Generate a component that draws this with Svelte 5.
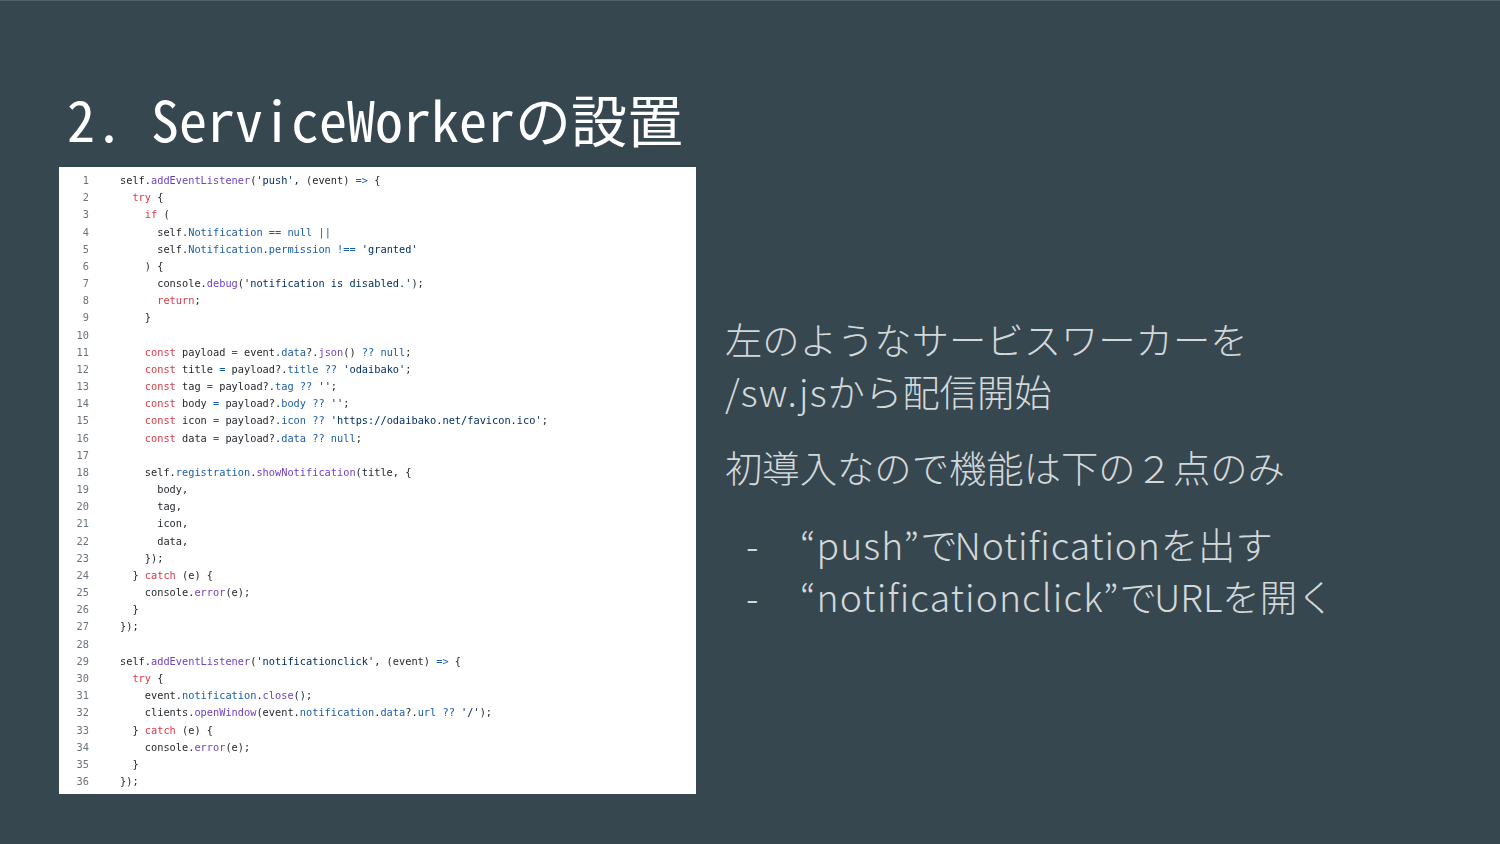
<script lang="ts">
	// k: keyword, f: function, p: property, s: string
	const source = [
		"self.{f:addEventListener}({s:'push'}, (event) {p:=>} {",
		"  {k:try} {",
		"    {k:if} (",
		"      self.{p:Notification} {p:==} {p:null} {p:||}",
		"      self.{p:Notification}.{p:permission} {p:!==} {s:'granted'}",
		"    ) {",
		"      console.{f:debug}({s:'notification is disabled.'});",
		"      {k:return};",
		"    }",
		"",
		"    {k:const} payload {p:=} event.{p:data}?.{f:json}() {p:??} {p:null};",
		"    {k:const} title {p:=} payload?.{p:title} {p:??} {s:'odaibako'};",
		"    {k:const} tag {p:=} payload?.{p:tag} {p:??} {s:''};",
		"    {k:const} body {p:=} payload?.{p:body} {p:??} {s:''};",
		"    {k:const} icon {p:=} payload?.{p:icon} {p:??} {s:'https://odaibako.net/favicon.ico'};",
		"    {k:const} data {p:=} payload?.{p:data} {p:??} {p:null};",
		"",
		"    self.{p:registration}.{f:showNotification}(title, {",
		"      body,",
		"      tag,",
		"      icon,",
		"      data,",
		"    });",
		"  } {k:catch} (e) {",
		"    console.{f:error}(e);",
		"  }",
		"});",
		"",
		"self.{f:addEventListener}({s:'notificationclick'}, (event) {p:=>} {",
		"  {k:try} {",
		"    event.{p:notification}.{f:close}();",
		"    clients.{f:openWindow}(event.{p:notification}.{p:data}?.{p:url} {p:??} {s:'/'});",
		"  } {k:catch} (e) {",
		"    console.{f:error}(e);",
		"  }",
		"});"
	];

	function tokens(line: string) {
		const out: { cls: string; text: string }[] = [];
		const re = /\{([kfps]):([^}]*)\}/g;
		let last = 0;
		let m: RegExpExecArray | null;
		while ((m = re.exec(line))) {
			if (m.index > last) out.push({ cls: '', text: line.slice(last, m.index) });
			out.push({ cls: m[1], text: m[2] });
			last = m.index + m[0].length;
		}
		if (last < line.length) out.push({ cls: '', text: line.slice(last) });
		return out;
	}
</script>

<div class="slide">
	<h1>2. ServiceWorkerの設置</h1>
	<div class="columns">
		<div class="code">
			{#each source as line, i}
				<div class="line">
					<span class="num">{i + 1}</span>
					<span class="src">{#each tokens(line) as t}<span class={t.cls}>{t.text}</span>{/each}</span>
				</div>
			{/each}
		</div>
		<div class="body">
			<p>左のようなサービスワーカーを<br /><span class="en">/sw.js</span>から配信開始</p>
			<p class="second">初導入なので機能は下の２点のみ</p>
			<ul>
				<li><span class="dash">-</span><span class="en">“push”</span><span class="de">で</span><span class="name">Notification</span>を出す</li>
				<li><span class="dash">-</span><span class="en">“notificationclick”</span><span class="de">で</span>URLを開く</li>
			</ul>
		</div>
	</div>
</div>

<style>
	:global(body) {
		margin: 0;
		background: #37474f;
	}

	.slide {
		width: 1500px;
		height: 844px;
		box-sizing: border-box;
		background: #37474f;
		border-top: 1px solid #4f636d;
		padding: 87px 0 0 59px;
		overflow: hidden;
	}

	h1 {
		margin: 0 0 0 8px;
		height: 79px;
		font-family: "Noto Sans Mono CJK JP", "Noto Sans CJK JP", monospace;
		font-weight: 300;
		font-size: 56px;
		line-height: 60px;
		color: #ffffff;
		white-space: nowrap;
	}

	.columns {
		display: flex;
		align-items: flex-start;
	}

	.code {
		width: 637px;
		height: 627px;
		box-sizing: border-box;
		flex: none;
		padding-top: 5px;
		background: #ffffff;
		font-family: "DejaVu Sans Mono", monospace;
		font-size: 10.3px;
		line-height: 17.18px;
		color: #24292e;
		filter: blur(0.35px);
	}

	.line {
		display: flex;
		height: 17.18px;
		white-space: pre;
	}

	.num {
		width: 30px;
		margin-right: 31px;
		text-align: right;
		color: #6a737d;
	}

	.k { color: #d73a49; }
	.f { color: #6f42c1; }
	.p { color: #1c5da8; }
	.s { color: #032f62; }

	.body {
		margin: 146px 0 0 29px;
		font-family: "Noto Sans CJK JP", sans-serif;
		font-weight: 300;
		font-size: 37.35px;
		line-height: 52px;
		color: #d3d8da;
		white-space: nowrap;
	}

	.en {
		letter-spacing: 1.1px;
	}

	.name {
		letter-spacing: 0.8px;
	}

	.de {
		letter-spacing: -3px;
	}

	p {
		margin: 0;
	}

	.second {
		margin-top: 24px;
	}

	ul {
		list-style: none;
		margin: 25px 0 0;
		padding: 0;
	}

	.dash {
		display: inline-block;
		width: 75px;
		padding-left: 21px;
		box-sizing: border-box;
	}
</style>
